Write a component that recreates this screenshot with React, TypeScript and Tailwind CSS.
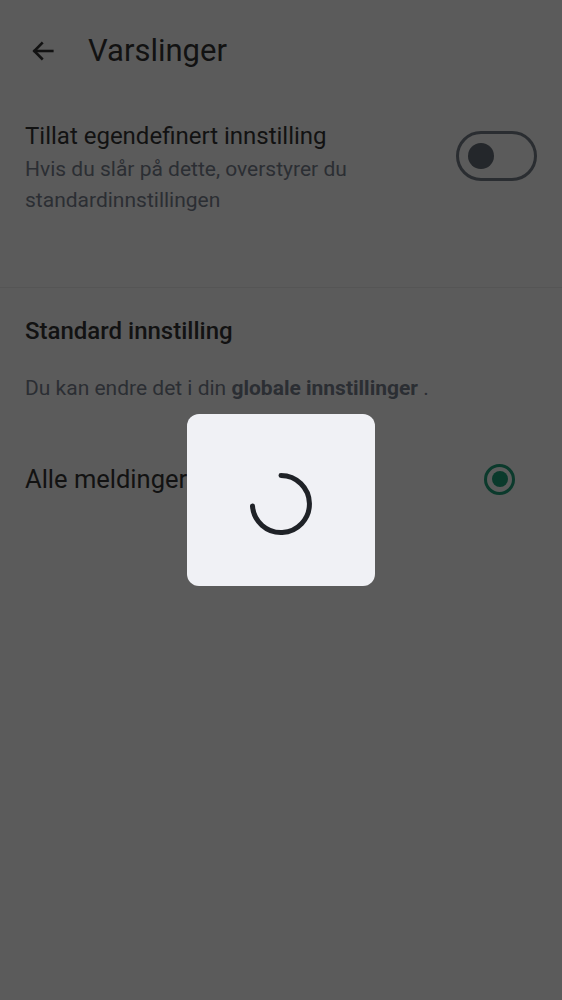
import React from 'react';

function BackArrow() {
  return (
    <svg width="28" height="28" viewBox="0 0 24 24" fill="none" stroke="#121212" strokeWidth="2.2" strokeLinecap="square">
      <path d="M20 12H5" />
      <path d="M11 5.5L4.5 12L11 18.5" />
    </svg>
  );
}

function Spinner() {
  // 270 degree arc, from 12 o'clock clockwise to 9 o'clock
  return (
    <svg width="72" height="72" viewBox="0 0 72 72" fill="none">
      <path d="M36 5.5 A28.5 28.5 0 1 1 7.5 36" stroke="#1f2227" strokeWidth="5" strokeLinecap="round" />
    </svg>
  );
}

export default function App() {
  return (
    <div className="relative w-[562px] h-[1000px] bg-[#5b5b5b] overflow-hidden" style={{ fontFamily: 'Roboto, "Noto Sans", sans-serif' }}>
      {/* Header */}
      <div className="flex items-center h-[100px] pl-[29px] pt-[2px]">
        <BackArrow />
        <h1 className="ml-[31px] text-[31px] leading-[36px] text-[#121212]">Varslinger</h1>
      </div>

      {/* Custom setting */}
      <div className="flex items-start justify-between pl-[25px] pr-[25px] pt-[21px] pb-[71px] border-b border-[#555555]">
        <div className="flex flex-col">
          <span className="text-[24px] leading-[30px] text-[#121212]">Tillat egendefinert innstilling</span>
          <span className="mt-[3px] text-[21px] leading-[31px] text-[#2b2e33] w-[360px]">
            Hvis du slår på dette, overstyrer du standardinnstillingen
          </span>
        </div>
        <div className="mt-[10px] w-[81px] h-[50px] rounded-full border-[3px] border-[#2a2d31] flex items-center pl-[9px] shrink-0">
          <div className="w-[26px] h-[26px] rounded-full bg-[#24272b]" />
        </div>
      </div>

      {/* Default setting */}
      <div className="px-[25px] pt-[27px]">
        <h2 className="text-[24px] leading-[32px] font-medium text-[#121212]">Standard innstilling</h2>
        <p className="mt-[26px] text-[21px] leading-[30px] text-[#2b2e33]">
          Du kan endre det i din <span className="font-bold">globale innstillinger</span> .
        </p>
        <div className="mt-[60px] flex items-center justify-between pr-[22px]">
          <span className="text-[25.5px] leading-[32px] text-[#121212]">Alle meldinger</span>
          <div className="w-[31px] h-[31px] rounded-full border-[3px] border-[#0b3a2c] flex items-center justify-center">
            <div className="w-[16px] h-[16px] rounded-full bg-[#0b3a2c]" />
          </div>
        </div>
      </div>

      {/* Loading dialog */}
      <div className="absolute left-[187px] top-[414px] w-[188px] h-[172px] rounded-[12px] bg-[#f0f1f5] flex items-center justify-center pt-[12px]">
        <Spinner />
      </div>
    </div>
  );
}
